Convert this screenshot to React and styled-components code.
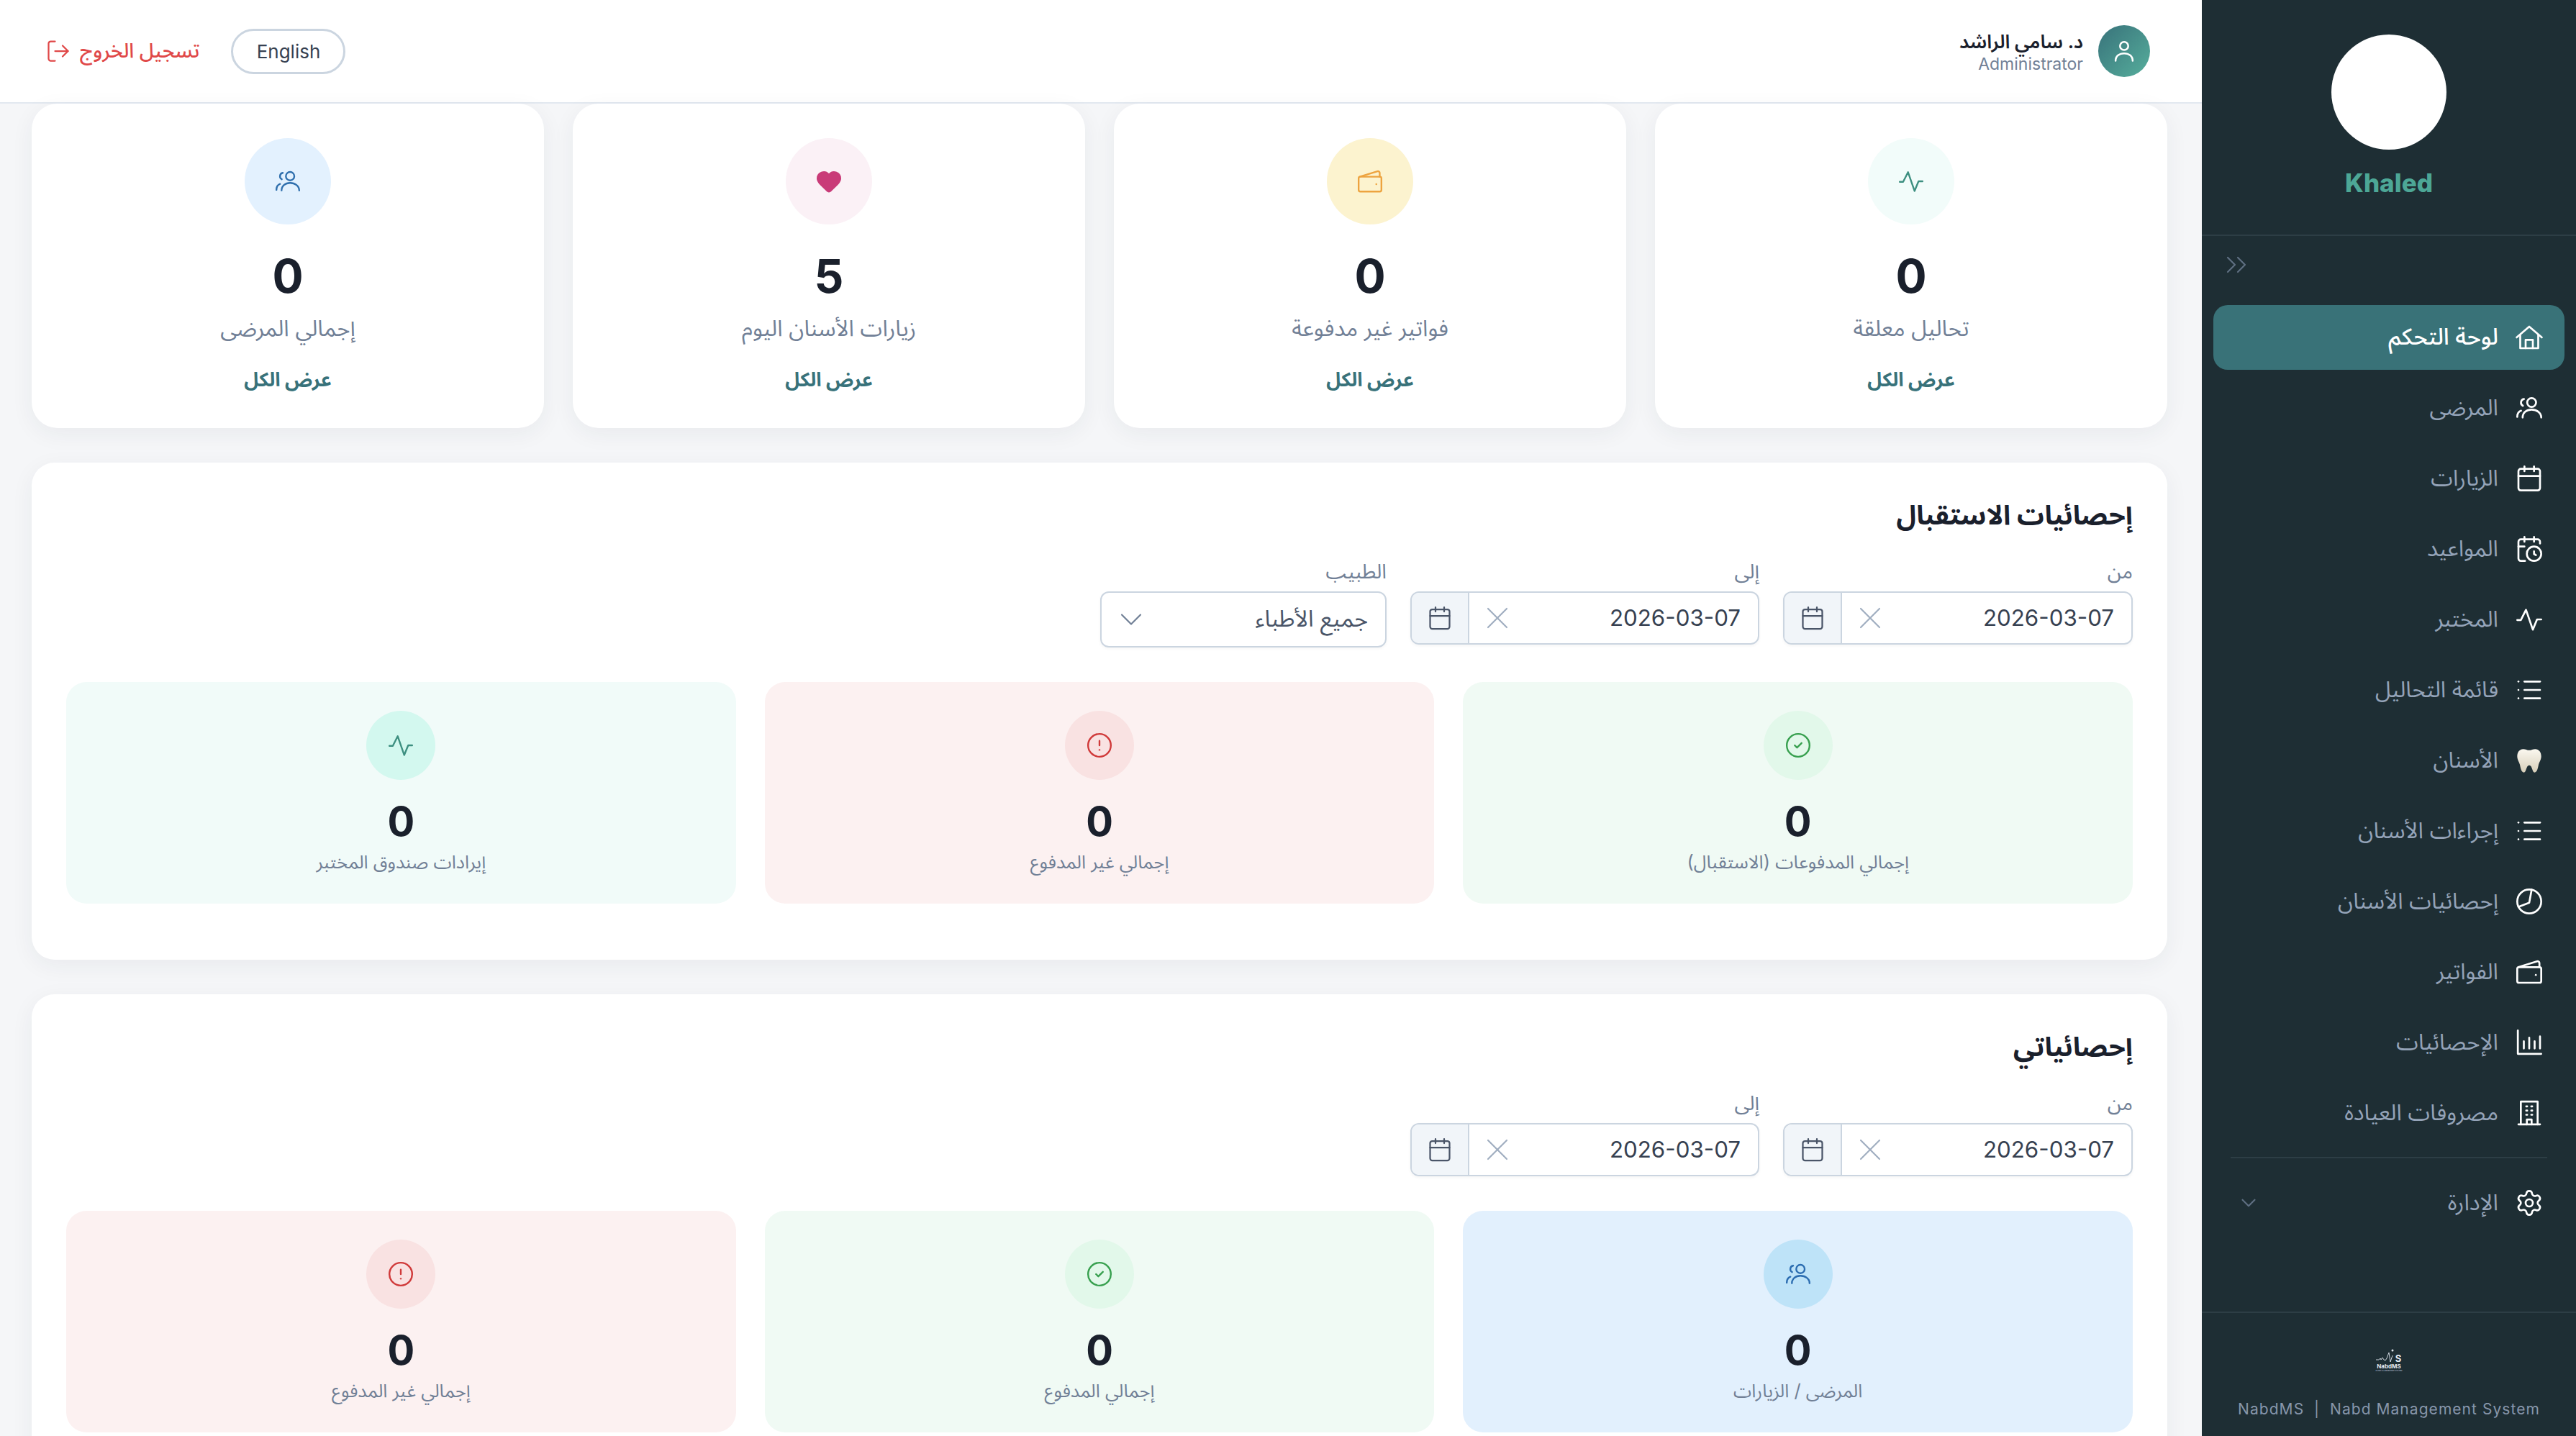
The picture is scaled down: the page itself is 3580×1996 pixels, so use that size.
import React from 'react';
import styled, { createGlobalStyle } from 'styled-components';
import {
  Calendar,
  CalendarClock,
  ChevronDown,
  ChevronsRight,
  CircleAlert,
  CircleCheck,
  Heart,
  List,
  LogOut,
  Settings,
  X,
} from 'lucide-react';

const GlobalStyle = createGlobalStyle`
  html, body {
    margin: 0;
    height: 100%;
    overflow: hidden;
  }
  body {
    font-family: Inter, "Noto Sans Arabic", "DejaVu Sans", sans-serif;
    background: #f5f6f8;
  }
  * { box-sizing: border-box; }
`;

const Svg = ({ children, size = 24, strokeWidth = 1.7 }) => (
  <svg
    width={size}
    height={size}
    viewBox="0 0 24 24"
    fill="none"
    stroke="currentColor"
    strokeWidth={strokeWidth}
    strokeLinecap="round"
    strokeLinejoin="round"
  >
    {children}
  </svg>
);

const HomeIcon = (p) => (
  <Svg {...p}>
    <path d="M1.5 12 12 3l10.5 9" />
    <path d="M4.5 10v11h15V10" />
    <path d="M9 21v-7h6v7" />
  </Svg>
);

const UsersIcon = (p) => (
  <Svg {...p}>
    <circle cx="14" cy="7.5" r="3.7" />
    <path d="M6.5 20c0-4 3.2-6.6 7.5-6.6s8 2.6 8 6.6" />
    <path d="M7.6 4.6a3 3 0 0 0-.9 5.6" />
    <path d="M2 19.5c0-2.6 1-4.4 3.2-5.2" />
  </Svg>
);

const PersonIcon = (p) => (
  <Svg {...p}>
    <circle cx="12" cy="7.5" r="3.6" />
    <path d="M4.5 20.5c0-4.2 3.4-6.5 7.5-6.5s7.5 2.3 7.5 6.5" />
  </Svg>
);

const ActivityIcon = (p) => (
  <Svg {...p}>
    <path d="M2 12.5h3L9.3 4 15 20.5l3.5-8.5H22" />
  </Svg>
);

const PieIcon = (p) => (
  <Svg {...p}>
    <circle cx="12" cy="12" r="10" />
    <path d="M14 2.2 12 13 3 16.5" />
  </Svg>
);

const WalletIcon = (p) => (
  <Svg {...p}>
    <rect x="2" y="8" width="20" height="13" rx="1.4" />
    <path d="M3 8 18.5 3.2c1-.3 2 .4 2 1.4V8" />
    <path d="M17.5 14.5h.01" />
  </Svg>
);

const ChartIcon = (p) => (
  <Svg {...p}>
    <path d="M2.5 2v19.5H22" />
    <path d="M7.5 11v6M12 8v9M16.5 11v6M21 7v10" />
  </Svg>
);

const BuildingIcon = (p) => (
  <Svg {...p}>
    <path d="M5 21.5V2.5h14v19" />
    <path d="M3 21.5h18" />
    <path d="M10 21.5v-4h4v4" />
    <path d="M9.5 6.5h.8M13.7 6.5h.8M9.5 10h.8M13.7 10h.8M9.5 13.5h.8M13.7 13.5h.8" />
  </Svg>
);

const ToothIcon = ({ size = 24 }) => (
  <svg width={size} height={size} viewBox="0 0 24 24">
    <defs>
      <linearGradient id="tooth" x1="0" y1="0" x2="0" y2="1">
        <stop offset="0" stopColor="#fbf8f0" />
        <stop offset="1" stopColor="#d8cfba" />
      </linearGradient>
    </defs>
    <path
      fill="url(#tooth)"
      d="M7 2.5C4 2.5 2 5 2 8.5c0 3 1.6 4.5 2.2 7 .6 3 1.2 6.5 3.3 6.5 2.2 0 1.8-6 4.5-6s2.3 6 4.5 6c2.1 0 2.7-3.5 3.3-6.5.6-2.5 2.2-4 2.2-7 0-3.5-2-6-5-6-2 0-3.3 1-5 1s-3-1-5-1z"
    />
  </svg>
);

const navItems = [
  { label: 'لوحة التحكم', icon: HomeIcon, active: true },
  { label: 'المرضى', icon: UsersIcon },
  { label: 'الزيارات', icon: Calendar },
  { label: 'المواعيد', icon: CalendarClock },
  { label: 'المختبر', icon: ActivityIcon },
  { label: 'قائمة التحاليل', icon: List },
  { label: 'الأسنان', icon: ToothIcon },
  { label: 'إجراءات الأسنان', icon: List },
  { label: 'إحصائيات الأسنان', icon: PieIcon },
  { label: 'الفواتير', icon: WalletIcon },
  { label: 'الإحصائيات', icon: ChartIcon },
  { label: 'مصروفات العيادة', icon: BuildingIcon },
];

const topStats = [
  { value: 0, label: 'تحاليل معلقة', icon: ActivityIcon, bg: '#f2fcfa', fg: '#3d8f80' },
  { value: 0, label: 'فواتير غير مدفوعة', icon: WalletIcon, bg: '#fcf3cf', fg: '#eda33f' },
  { value: 5, label: 'زيارات الأسنان اليوم', icon: Heart, bg: '#fbf1f6', fg: '#c93b78', filled: true },
  { value: 0, label: 'إجمالي المرضى', icon: UsersIcon, bg: '#e3f1fe', fg: '#2f6fad' },
];

const tones = {
  green: { bg: '#f0faf4', circle: '#e2f8ea', fg: '#38a04f', icon: CircleCheck },
  red: { bg: '#fcf1f1', circle: '#f9e2e2', fg: '#d03a3a', icon: CircleAlert },
  teal: { bg: '#f1fbf9', circle: '#d3f8ef', fg: '#3d8f80', icon: ActivityIcon },
  blue: { bg: '#e2f0fd', circle: '#bee3f8', fg: '#2b6cb0', icon: UsersIcon },
};

const DateInput = () => (
  <DateBox>
    <DateValue>2026-03-07</DateValue>
    <ClearIcon>
      <X size={52} strokeWidth={1} />
    </ClearIcon>
    <CalendarAddon>
      <Calendar size={36} strokeWidth={1.5} />
    </CalendarAddon>
  </DateBox>
);

const SubStat = ({ tone, label }) => {
  const t = tones[tone];
  const Icon = t.icon;
  return (
    <SubCard $bg={t.bg}>
      <SubCircle $bg={t.circle} $fg={t.fg}>
        <Icon size={38} strokeWidth={1.5} />
      </SubCircle>
      <SubValue>0</SubValue>
      <SubLabel>{label}</SubLabel>
    </SubCard>
  );
};

export default function App() {
  return (
    <Shell dir="rtl">
      <GlobalStyle />
      <Sidebar>
        <Profile>
          <ProfilePhoto />
          <ProfileName>Khaled</ProfileName>
        </Profile>
        <CollapseRow>
          <ChevronsRight size={48} strokeWidth={1.1} />
        </CollapseRow>
        <Nav>
          {navItems.map(({ label, icon: Icon, active }) => (
            <NavItem key={label} $active={active}>
              <NavIcon>
                <Icon size={40} strokeWidth={1.6} />
              </NavIcon>
              {label}
            </NavItem>
          ))}
        </Nav>
        <NavDivider />
        <AdminRow>
          <NavIcon>
            <Settings size={40} strokeWidth={1.6} />
          </NavIcon>
          الإدارة
          <AdminChevron>
            <ChevronDown size={34} strokeWidth={1.5} />
          </AdminChevron>
        </AdminRow>
        <SideFooter>
          <svg width="40" height="32" viewBox="0 0 40 32">
            <path
              d="M2 15h4l2-2 1 2 2-3 2 3 2 1 2-3 3-8 2 13 3-9"
              fill="none"
              stroke="#e2e8f0"
              strokeWidth="0.9"
            />
            <circle cx="25" cy="2" r="1.5" fill="#e2e8f0" />
            <text x="33" y="18" fontFamily="Inter" fontSize="13" fontWeight="700" fill="#e2e8f0" textAnchor="middle">S</text>
            <text x="20" y="26.5" fontFamily="Inter" fontSize="8" fontWeight="700" fill="#e2e8f0" textAnchor="middle">NabdMS</text>
            <text x="20" y="30.5" fontFamily="Inter" fontSize="2.4" fill="#cbd5e0" textAnchor="middle">CLINIC &amp; LABORATORY SYSTEM</text>
          </svg>
          <FooterText dir="ltr">NabdMS&nbsp; |&nbsp; Nabd Management System</FooterText>
        </SideFooter>
      </Sidebar>

      <Main>
        <Header>
          <UserBlock>
            <UserAvatar>
              <PersonIcon size={38} strokeWidth={1.6} />
            </UserAvatar>
            <UserText>
              <UserName>د. سامي الراشد</UserName>
              <UserRole>Administrator</UserRole>
            </UserText>
          </UserBlock>
          <HeaderActions>
            <LangButton>English</LangButton>
            <LogoutLink>
              تسجيل الخروج
              <LogOut size={36} strokeWidth={1.5} />
            </LogoutLink>
          </HeaderActions>
        </Header>

        <Content>
          <TopGrid>
            {topStats.map(({ value, label, icon: Icon, bg, fg, filled }) => (
              <TopCard key={label}>
                <TopCircle $bg={bg} $fg={fg}>
                  <Icon size={38} strokeWidth={1.5} fill={filled ? fg : 'none'} />
                </TopCircle>
                <TopValue>{value}</TopValue>
                <TopLabel>{label}</TopLabel>
                <ViewAll>عرض الكل</ViewAll>
              </TopCard>
            ))}
          </TopGrid>

          <Section>
            <SectionTitle>إحصائيات الاستقبال</SectionTitle>
            <Filters>
              <Field $width={486}>
                <FieldLabel>من</FieldLabel>
                <DateInput />
              </Field>
              <Field $width={485}>
                <FieldLabel>إلى</FieldLabel>
                <DateInput />
              </Field>
              <Field $width={398}>
                <FieldLabel>الطبيب</FieldLabel>
                <SelectBox>
                  جميع الأطباء
                  <SelectChevron>
                    <ChevronDown size={52} strokeWidth={1} />
                  </SelectChevron>
                </SelectBox>
              </Field>
            </Filters>
            <SubGrid>
              <SubStat tone="green" label="إجمالي المدفوعات (الاستقبال)" />
              <SubStat tone="red" label="إجمالي غير المدفوع" />
              <SubStat tone="teal" label="إيرادات صندوق المختبر" />
            </SubGrid>
          </Section>

          <Section>
            <SectionTitle>إحصائياتي</SectionTitle>
            <Filters>
              <Field $width={486}>
                <FieldLabel>من</FieldLabel>
                <DateInput />
              </Field>
              <Field $width={485}>
                <FieldLabel>إلى</FieldLabel>
                <DateInput />
              </Field>
            </Filters>
            <SubGrid>
              <SubStat tone="blue" label="المرضى / الزيارات" />
              <SubStat tone="green" label="إجمالي المدفوع" />
              <SubStat tone="red" label="إجمالي غير المدفوع" />
            </SubGrid>
          </Section>
        </Content>
      </Main>
    </Shell>
  );
}

const Shell = styled.div`
  display: flex;
  height: 100vh;
  overflow: hidden;
`;

const Sidebar = styled.aside`
  width: 520px;
  flex-shrink: 0;
  display: flex;
  flex-direction: column;
  background: #1e2e34;
  color: #94a3b8;
`;

const Profile = styled.div`
  height: 328px;
  padding-top: 48px;
  display: flex;
  flex-direction: column;
  align-items: center;
  border-bottom: 2px solid #2d3e45;
`;

const ProfilePhoto = styled.div`
  width: 160px;
  height: 160px;
  border-radius: 50%;
  background: #fff;
`;

const ProfileName = styled.div`
  margin-top: 24px;
  font-size: 35px;
  line-height: 44px;
  font-weight: 800;
  color: #4da796;
`;

const CollapseRow = styled.div`
  height: 80px;
  padding-left: 24px;
  display: flex;
  align-items: center;
  justify-content: flex-end;
  color: #5f6f82;
`;

const Nav = styled.nav`
  display: flex;
  flex-direction: column;
  gap: 8px;
  padding: 16px 16px 0;
`;

const NavItem = styled.div`
  height: 90px;
  padding: 0 32px;
  display: flex;
  align-items: center;
  gap: 25px;
  border-radius: 20px;
  font-size: ${(p) => (p.$active ? '32px' : '31px')};
  font-weight: ${(p) => (p.$active ? 500 : 400)};
  background: ${(p) => (p.$active ? '#397278' : 'transparent')};
  color: ${(p) => (p.$active ? '#fff' : '#94a3b8')};
`;

const NavIcon = styled.span`
  width: 35px;
  height: 35px;
  display: flex;
  align-items: center;
  justify-content: center;
  color: #fff;
  & > svg {
    flex-shrink: 0;
  }
`;

const NavDivider = styled.div`
  height: 2px;
  margin: 16px 40px 17px;
  background: #2d3e45;
`;

const AdminRow = styled(NavItem)`
  margin: 0 16px;
`;

const AdminChevron = styled.span`
  margin-right: auto;
  display: flex;
  color: #5f6f82;
`;

const SideFooter = styled.footer`
  margin-top: auto;
  height: 173px;
  padding-top: 50px;
  display: flex;
  flex-direction: column;
  align-items: center;
  gap: 38px;
  border-top: 2px solid #2d3e45;
`;

const FooterText = styled.div`
  font-size: 21px;
  line-height: 28px;
  letter-spacing: 1.05px;
  color: #8796ab;
`;

const Main = styled.main`
  flex: 1;
  min-width: 0;
  display: flex;
  flex-direction: column;
  overflow: hidden;
`;

const Header = styled.header`
  height: 144px;
  flex-shrink: 0;
  padding: 0 72px 0 66px;
  display: flex;
  align-items: center;
  justify-content: space-between;
  background: #fff;
  border-bottom: 2px solid #e2e8f0;
`;

const UserBlock = styled.div`
  display: flex;
  align-items: center;
  gap: 21px;
`;

const UserAvatar = styled.div`
  width: 72px;
  height: 72px;
  border-radius: 50%;
  display: flex;
  align-items: center;
  justify-content: center;
  color: #fff;
  background: linear-gradient(135deg, #38727a, #56ae9c);
`;

const UserText = styled.div`
  display: flex;
  flex-direction: column;
`;

const UserName = styled.div`
  font-size: 26.5px;
  line-height: 36px;
  font-weight: 600;
  color: #1a202c;
`;

const UserRole = styled.div`
  font-size: 23px;
  line-height: 28px;
  color: #718096;
`;

const HeaderActions = styled.div`
  display: flex;
  align-items: center;
  gap: 44px;
`;

const LangButton = styled.button`
  width: 159px;
  height: 63px;
  border: 3px solid #cbd5e0;
  border-radius: 32px;
  background: #fff;
  font-family: Inter, sans-serif;
  font-size: 26px;
  color: #374151;
`;

const LogoutLink = styled.div`
  display: flex;
  align-items: center;
  gap: 12px;
  margin-left: -3px;
  font-size: 28px;
  font-weight: 500;
  color: #e04848;
`;

const Content = styled.div`
  padding: 0 48px 0 44px;
  display: flex;
  flex-direction: column;
  gap: 48px;
`;

const TopGrid = styled.div`
  display: grid;
  grid-template-columns: repeat(4, 1fr);
  gap: 40px;
`;

const whiteCard = `
  background: #fff;
  box-shadow: 0 8px 32px rgba(30, 45, 60, 0.06);
`;

const TopCard = styled.div`
  ${whiteCard}
  height: 451px;
  padding-top: 48px;
  border-radius: 36px;
  display: flex;
  flex-direction: column;
  align-items: center;
`;

const TopCircle = styled.div`
  width: 120px;
  height: 120px;
  border-radius: 50%;
  display: flex;
  align-items: center;
  justify-content: center;
  background: ${(p) => p.$bg};
  color: ${(p) => p.$fg};
`;

const TopValue = styled.div`
  margin-top: 34px;
  font-size: 64px;
  line-height: 76px;
  font-weight: 700;
  color: #1a202c;
`;

const TopLabel = styled.div`
  margin-top: 10px;
  font-size: 31px;
  line-height: 48px;
  color: #718096;
`;

const ViewAll = styled.div`
  margin-top: 28px;
  font-size: 27px;
  line-height: 40px;
  font-weight: 700;
  color: #38727a;
`;

const Section = styled.section`
  ${whiteCard}
  padding: 48px 48px 78px;
  border-radius: 32px;
`;

const SectionTitle = styled.h2`
  margin: 0;
  font-size: 37.5px;
  line-height: 50px;
  font-weight: 700;
  color: #1a202c;
`;

const Filters = styled.div`
  margin-top: 33px;
  display: flex;
  align-items: flex-start;
  gap: 33px;
`;

const Field = styled.div`
  width: ${(p) => p.$width}px;
`;

const FieldLabel = styled.div`
  height: 48px;
  font-size: 28px;
  line-height: 40px;
  color: #718096;
`;

const DateBox = styled.div`
  height: 74px;
  display: flex;
  align-items: center;
  border: 2px solid #cbd5e0;
  border-radius: 12px;
  overflow: hidden;
  box-shadow: 0 2px 4px rgba(0, 0, 0, 0.04);
`;

const DateValue = styled.div`
  flex: 1;
  padding: 0 24px;
  font-size: 31.3px;
  color: #374151;
`;

const ClearIcon = styled.span`
  margin-left: 13px;
  display: flex;
  color: #a0aec0;
`;

const CalendarAddon = styled.div`
  width: 80px;
  height: 100%;
  display: flex;
  align-items: center;
  justify-content: center;
  background: #f1f5f9;
  border-right: 2px solid #cbd5e0;
  color: #4a5568;
`;

const SelectBox = styled.div`
  height: 78px;
  padding: 0 24px;
  display: flex;
  align-items: center;
  justify-content: space-between;
  border: 2px solid #cbd5e0;
  border-radius: 12px;
  box-shadow: 0 2px 4px rgba(0, 0, 0, 0.04);
  font-size: 32px;
  color: #4a5568;
`;

const SelectChevron = styled.span`
  margin-left: -9px;
  display: flex;
  color: #718096;
`;

const SubGrid = styled.div`
  margin-top: 48px;
  display: grid;
  grid-template-columns: repeat(3, 1fr);
  gap: 40px;
`;

const SubCard = styled.div`
  height: 308px;
  padding-top: 40px;
  border-radius: 28px;
  display: flex;
  flex-direction: column;
  align-items: center;
  background: ${(p) => p.$bg};
`;

const SubCircle = styled.div`
  width: 96px;
  height: 96px;
  border-radius: 50%;
  display: flex;
  align-items: center;
  justify-content: center;
  background: ${(p) => p.$bg};
  color: ${(p) => p.$fg};
`;

const SubValue = styled.div`
  margin-top: 24px;
  font-size: 56px;
  line-height: 68px;
  font-weight: 700;
  color: #1a202c;
`;

const SubLabel = styled.div`
  margin-top: 3px;
  font-size: 25.5px;
  line-height: 38px;
  color: #718096;
`;
